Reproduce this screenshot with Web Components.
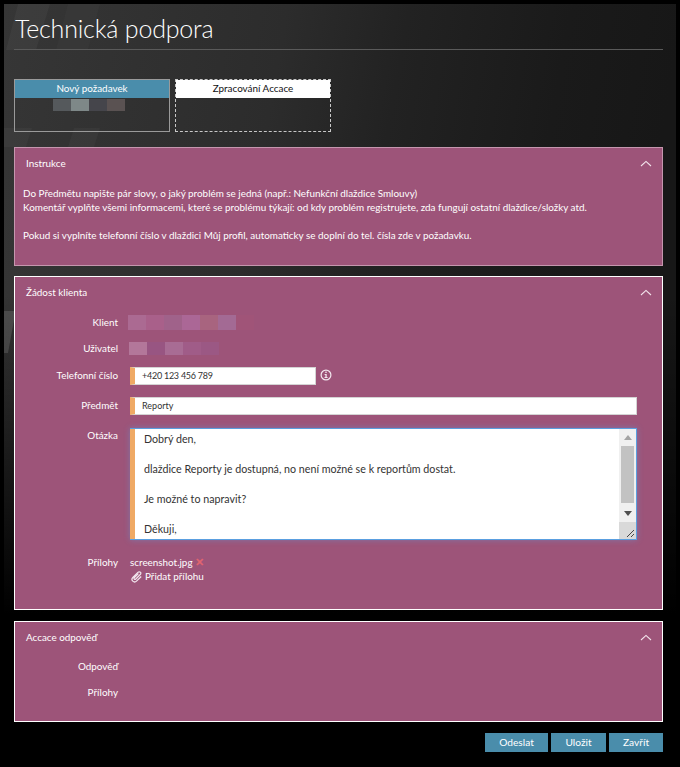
<!DOCTYPE html>
<html lang="cs">
<head>
<meta charset="utf-8">
<title>Technická podpora</title>
<style>
html,body{margin:0;padding:0;background:#000;}
body{font-family:Lato,"Open Sans",sans-serif;}
</style>
</head>
<body>
<support-page>
    <page-title>Technická podpora</page-title>
    <tile-row>
        <status-tile label="Nový požadavek" active><pixel-blur cells="#55595c,#7e8888,#45454b,#5a5252" style="margin-left:-6px"></pixel-blur></status-tile>
        <status-tile label="Zpracování Accace"></status-tile>
    </tile-row>
    <panel-box heading="Instrukce" dim style="height:119px">
        Do Předmětu napište pár slovy, o jaký problém se jedná (např.: Nefunkční dlaždice Smlouvy)<br>
        Komentář vyplňte všemi informacemi, které se problému týkají: od kdy problém registrujete, zda fungují ostatní dlaždice/složky atd.<br><br>
        Pokud si vyplníte telefonní číslo v dlaždici Můj profil, automaticky se doplní do tel. čísla zde v požadavku.
    </panel-box>
    <panel-box heading="Žádost klienta" style="height:334px;margin-top:10px">
        <form-row label="Klient" height="26" style="margin-top:-1px"><pixel-blur cells="#ab6a92,#a9608a,#a0628a,#ab6796,#a8647f,#a36a94,#a05478" size="18,15" style="margin-left:-2px"></pixel-blur></form-row>
        <form-row label="Uživatel" height="26"><pixel-blur cells="#b3779a,#985582,#a86c94,#a05c88,#9b5884" size="18,13" style="margin-left:-1px"></pixel-blur></form-row>
        <form-row label="Telefonní číslo" height="28">
            <text-field width="186" style="letter-spacing:-.25px">+420 123 456 789</text-field>
            <svg width="12" height="12" viewBox="0 0 12 12" style="margin-left:4px;flex:none">
                <circle cx="6" cy="6" r="4.9" fill="none" stroke="#f2e6ee" stroke-width="1.2"/>
                <rect x="5.3" y="2.6" width="1.4" height="1.4" fill="#f2e6ee"/>
                <path d="M4.6 5h2.1v3h.9v.9H4.5V8h.9V5.9h-.8z" fill="#f2e6ee"/>
            </svg>
        </form-row>
        <form-row label="Předmět" height="32"><text-field style="flex:1">Reporty</text-field></form-row>
        <form-row label="Otázka" height="112" top style="margin-top:5px">
            <message-box>
                <div>Dobrý den,</div><div>&nbsp;</div>
                <div>dlaždice Reporty je dostupná, no není možné se k reportům dostat.</div><div>&nbsp;</div>
                <div>Je možné to napravit?</div><div>&nbsp;</div>
                <div>Děkuji,</div>
            </message-box>
        </form-row>
        <form-row label="Přílohy" height="40" top style="margin-top:15px"><attach-list file="screenshot.jpg"></attach-list></form-row>
    </panel-box>
    <panel-box heading="Accace odpověď" style="height:101px;margin-top:11px">
        <form-row label="Odpověď" height="26" style="margin-top:-2px"></form-row>
        <form-row label="Přílohy" height="26"></form-row>
    </panel-box>
    <action-bar>
        <action-button width="63">Odeslat</action-button>
        <action-button width="55">Uložit</action-button>
        <action-button width="54">Zavřít</action-button>
    </action-bar>
</support-page>

<script>
class SupportPage extends HTMLElement{
    constructor(){
        super();
        this.attachShadow({mode:'open'}).innerHTML = `
            <style>
                :host{display:block;width:680px;height:767px;box-sizing:border-box;padding:4px;background:#000;overflow:hidden;
                    font-family:Lato,"Open Sans",sans-serif;}
                .inner{position:relative;height:759px;box-sizing:border-box;padding:0 13px 0 10px;
                    background:
                        linear-gradient(to bottom,rgba(0,0,0,0) 0,rgba(0,0,0,0) 290px,rgba(0,0,0,.45) 440px,#000 610px),
                        linear-gradient(100deg,#363636 0,#2c2c2c 280px,#222 400px,#1a1a1a 560px,#171717 672px);}
                /* faint streaks in the wallpaper */
                svg{position:absolute;left:0;top:0;}
                .content{position:relative;}
            </style>
            <div class="inner">
                <svg width="672" height="759" viewBox="0 0 672 759">
                    <polygon points="14,0 46,0 32,46 2,46" fill="#fff" opacity=".035"/>
                    <polygon points="64,0 96,0 84,46 52,46" fill="#fff" opacity=".02"/>
                    <polygon points="0,124 28,124 22,143 0,143" fill="#fff" opacity=".03"/>
                    <polygon points="70,124 96,124 90,143 64,143" fill="#fff" opacity=".03"/>
                    <polygon points="0,307 10,307 10,316 4,349 0,349" fill="#fff" opacity=".12"/>
                </svg>
                <div class="content"><slot></slot></div>
            </div>`;
    }
}
customElements.define('support-page',SupportPage);

class PageTitle extends HTMLElement{
    constructor(){
        super();
        this.attachShadow({mode:'open'}).innerHTML = `
            <style>
                :host{display:block;height:46px;box-sizing:border-box;border-bottom:1px solid #5a5a5a;margin-bottom:29px;
                    color:#fff;font-size:25px;letter-spacing:-.2px;font-weight:300;line-height:48px;white-space:nowrap;padding-left:1px;}
            </style><slot></slot>`;
    }
}
customElements.define('page-title',PageTitle);

class TileRow extends HTMLElement{
    constructor(){
        super();
        this.attachShadow({mode:'open'}).innerHTML = `
            <style>:host{display:flex;gap:5px;margin-bottom:15px;}</style><slot></slot>`;
    }
}
customElements.define('tile-row',TileRow);

class StatusTile extends HTMLElement{
    constructor(){
        super();
        const on = this.hasAttribute('active');
        this.attachShadow({mode:'open'}).innerHTML = `
            <style>
                :host{display:block;width:156px;height:53px;box-sizing:border-box;border:1px ${on?'solid #9a9a9a':'dashed #c8c8c8'};}
                .head{height:18px;line-height:17px;text-align:center;font-size:9.9px;
                    background:${on?'#4a8dab':'#fff'};color:${on?'#fff':'#111'};}
                .body{display:flex;justify-content:center;padding-top:1px;}
            </style>
            <div class="head">${this.getAttribute('label')}</div>
            <div class="body"><slot></slot></div>`;
    }
}
customElements.define('status-tile',StatusTile);

class PixelBlur extends HTMLElement{
    constructor(){
        super();
        const [w,h] = (this.getAttribute('size') || '18,12').split(',');
        const cells = this.getAttribute('cells').split(',').map(c=>`<i style="background:${c}"></i>`).join('');
        this.attachShadow({mode:'open'}).innerHTML = `
            <style>
                :host{display:flex;}
                i{display:block;width:${w}px;height:${h}px;}
            </style>${cells}`;
    }
}
customElements.define('pixel-blur',PixelBlur);

class PanelBox extends HTMLElement{
    constructor(){
        super();
        const dim = this.hasAttribute('dim');
        this.attachShadow({mode:'open'}).innerHTML = `
            <style>
                :host{display:block;box-sizing:border-box;background:#9d5479;color:#fff;font-size:9.9px;line-height:14px;
                    border:1px solid ${dim?'#c596ae':'#fff'};}
                .head{display:flex;justify-content:space-between;align-items:center;height:31px;padding:0 10px 0 11px;}
                .head span{margin-top:-2px;}
                .body{padding:0 25px 0 8px;}
                svg{display:block;}
            </style>
            <div class="head">
                <span>${this.getAttribute('heading')}</span>
                <svg width="12" height="7" viewBox="0 0 12 7"><path d="M1 6l5-4.6L11 6" fill="none" stroke="#f3e4ec" stroke-width="1.1"/></svg>
            </div>
            <div class="body" style="padding-top:${dim?'7px':'4px'}"><slot></slot></div>`;
    }
}
customElements.define('panel-box',PanelBox);

class FormRow extends HTMLElement{
    constructor(){
        super();
        const top = this.hasAttribute('top');
        this.attachShadow({mode:'open'}).innerHTML = `
            <style>
                :host{display:flex;align-items:${top?'flex-start':'center'};height:${this.getAttribute('height')}px;}
                .lab{width:95px;flex:none;text-align:right;margin-right:12px;margin-top:${top?'0':'-4px'};}
                .val{flex:1;display:flex;align-items:center;min-width:0;margin-top:-4px;}
            </style>
            <div class="lab">${this.getAttribute('label')}</div>
            <div class="val"><slot></slot></div>`;
    }
}
customElements.define('form-row',FormRow);

class TextField extends HTMLElement{
    constructor(){
        super();
        const w = this.getAttribute('width');
        this.attachShadow({mode:'open'}).innerHTML = `
            <style>
                :host{display:block;box-sizing:border-box;height:18px;line-height:16px;${w?'width:'+w+'px;flex:none;':''}
                    background:#fff;color:#333;border:1px solid #d4d4d4;border-left:5px solid #efa964;padding-left:7px;
                    font-size:9px;margin-top:1px;}
            </style><slot></slot>`;
    }
}
customElements.define('text-field',TextField);

class MessageBox extends HTMLElement{
    constructor(){
        super();
        this.attachShadow({mode:'open'}).innerHTML = `
            <style>
                :host{display:flex;flex:1;box-sizing:border-box;height:112px;margin-top:4px;background:#fff;color:#333;
                    border:1px solid #5a9fe0;border-left:0;box-shadow:0 0 6px rgba(90,159,224,.45);font-size:10.7px;line-height:15px;}
                .edge{width:5px;flex:none;background:#efa964;}
                .text{flex:1;padding:2px 0 0 9px;overflow:hidden;white-space:nowrap;}
                .bar{width:17px;flex:none;background:#f0f0f0;display:flex;flex-direction:column;align-items:center;}
                .btn{height:17px;display:flex;align-items:center;justify-content:center;flex:none;}
                .thumb{width:13px;height:57px;background:#c2c2c2;flex:none;}
                .gap{flex:1;}
                .grip{height:17px;width:17px;background:#d9d9d9;flex:none;}
                svg{display:block;}
            </style>
            <div class="edge"></div>
            <div class="text"><slot></slot></div>
            <div class="bar">
                <div class="btn"><svg width="8" height="5" viewBox="0 0 8 5"><path d="M4 0l4 5H0z" fill="#a3a3a3"/></svg></div>
                <div class="thumb"></div>
                <div class="gap"></div>
                <div class="btn"><svg width="8" height="5" viewBox="0 0 8 5"><path d="M0 0h8L4 5z" fill="#505050"/></svg></div>
                <div class="grip"><svg width="17" height="17" viewBox="0 0 17 17"><path d="M8 15l7-7M12 15l3-3" stroke="#444" stroke-width="1" fill="none"/></svg></div>
            </div>`;
    }
}
customElements.define('message-box',MessageBox);

class AttachList extends HTMLElement{
    constructor(){
        super();
        this.attachShadow({mode:'open'}).innerHTML = `
            <style>
                :host{display:block;line-height:13px;margin-top:4px;}
                .x{color:#e0646f;font-size:11px;font-weight:700;margin-left:2px;}
                .add{display:flex;align-items:center;gap:2px;margin-top:1px;}
                svg{display:block;flex:none;}
            </style>
            <div>${this.getAttribute('file')}<span class="x">✕</span></div>
            <div class="add">
                <svg width="13" height="13" viewBox="0 0 13 13"><path d="M10.6 2.4a1.9 1.9 0 0 0-2.7 0L2.8 7.5a2.6 2.6 0 0 0 3.7 3.7l4.7-4.7M8.4 3.6l-4.2 4.2a1 1 0 0 0 1.4 1.4l5-5a1.9 1.9 0 0 0 0-1.8" fill="none" stroke="#f2e6ee" stroke-width="1.2"/></svg>
                <span>Přidat přílohu</span>
            </div>`;
    }
}
customElements.define('attach-list',AttachList);

class ActionBar extends HTMLElement{
    constructor(){
        super();
        this.attachShadow({mode:'open'}).innerHTML = `
            <style>:host{display:flex;justify-content:flex-end;gap:3px;margin-top:11px;}</style><slot></slot>`;
    }
}
customElements.define('action-bar',ActionBar);

class ActionButton extends HTMLElement{
    constructor(){
        super();
        this.attachShadow({mode:'open'}).innerHTML = `
            <style>
                :host{display:block;box-sizing:border-box;width:${this.getAttribute('width')}px;height:19px;line-height:19px;text-align:center;
                    background:#4a8dab;color:#fff;font-size:10.2px;}
            </style><slot></slot>`;
    }
}
customElements.define('action-button',ActionButton);
</script>
</body>
</html>
